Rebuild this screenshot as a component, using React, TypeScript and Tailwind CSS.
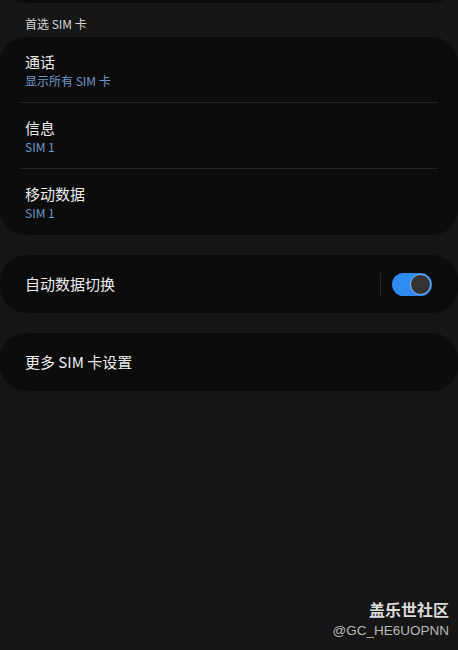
const font = { fontFamily: '"Noto Sans CJK SC", "Noto Sans", sans-serif' };

function Item({ title, sub, last }: { title: string; sub: string; last?: boolean }) {
  return (
    <div className="px-5">
      <div className={`h-[66px] flex flex-col justify-center pt-[1px] px-[5px] ${last ? '' : 'border-b border-[#242424]'}`}>
        <div className="text-[15px] leading-[20px] text-[#ececec]">{title}</div>
        <div className="text-[12px] leading-[16px] text-[#6f97c8] mt-[1px]">{sub}</div>
      </div>
    </div>
  );
}

export default function App() {
  return (
    <div className="w-[458px] h-[650px] bg-[#161616] overflow-hidden flex flex-col relative" style={font}>
      <div className="h-[3px] -mt-[30px] pt-[30px] bg-[#0c0c0c] rounded-b-[26px] box-content" />
      <div className="h-[34px] flex items-center pt-[7px] px-[25px] text-[12px] text-[#d4d4d4]">首选 SIM 卡</div>
      <div className="bg-[#0c0c0c] rounded-[26px] flex flex-col">
        <Item title="通话" sub="显示所有 SIM 卡" />
        <Item title="信息" sub="SIM 1" />
        <Item title="移动数据" sub="SIM 1" last />
      </div>
      <div className="mt-[20px] h-[58px] bg-[#0c0c0c] rounded-[26px] flex items-center pl-[25px] pr-[26px]">
        <div className="flex-1 text-[15px] text-[#ececec]">自动数据切换</div>
        <div className="w-px h-[23px] bg-[#262626] mr-[11px]" />
        <div className="w-[40px] h-[23px] rounded-full bg-[#2f8bf0] flex items-center justify-end pr-[1px]">
          <div className="w-[21px] h-[21px] rounded-full bg-[#333333] border-[1.5px] border-[#7fb6f5]" />
        </div>
      </div>
      <div className="mt-[20px] h-[58px] bg-[#0c0c0c] rounded-[26px] flex items-center px-[25px]">
        <div className="text-[15px] text-[#ececec]">更多 SIM 卡设置</div>
      </div>
      <div className="absolute right-[9px] top-[597px] flex flex-col items-end">
        <div className="text-[16px] leading-[24px] font-bold text-[#dcdcdc]">盖乐世社区</div>
        <div className="text-[13.5px] leading-[20px] text-[#b8b8b8]" style={{ fontFamily: '"Liberation Sans", sans-serif' }}>@GC_HE6UOPNN</div>
      </div>
    </div>
  );
}
